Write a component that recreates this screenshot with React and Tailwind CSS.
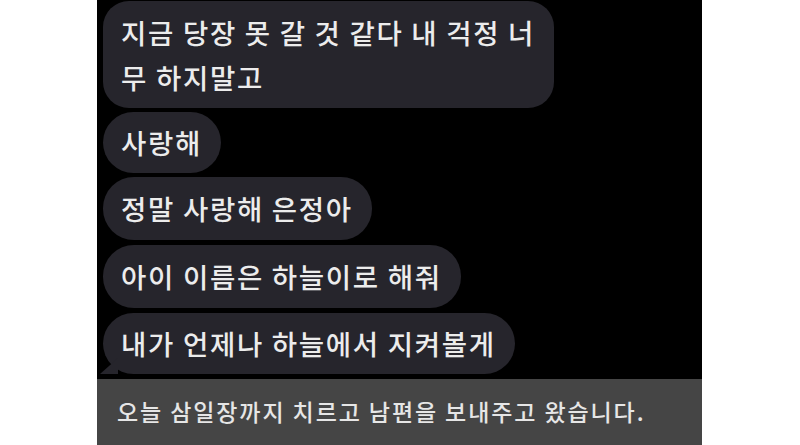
import React from "react";

const font = { fontFamily: '"Noto Sans CJK KR", "Noto Sans", sans-serif' };

function Bubble({ children, className = "", tail = false }) {
  return (
    <div className={"relative w-fit bg-[#26252c] text-[#ececec] font-medium text-[27.5px] tracking-[1.7px] leading-[45px] pl-[18px] pr-[19px] " + className}>
      {children}
      {tail && (
        <div className="absolute left-[-3px] bottom-0 w-[18px] h-[16px] bg-[#26252c] [clip-path:polygon(0_100%,100%_0,100%_100%)]" />
      )}
    </div>
  );
}

export default function App() {
  return (
    <div className="w-[800px] h-[445px] bg-white flex overflow-hidden" style={font}>
      <div className="ml-[97px] w-[605px] h-[445px] bg-black flex flex-col">
        <div className="flex flex-col pl-[6px] pt-[1px] gap-[4px]">
          <Bubble className="rounded-[26px] pt-[9px] pb-[8px]">
            지금 당장 못 갈 것 같다 내 걱정 너<br />무 하지말고
          </Bubble>
          <Bubble className="rounded-[31px] py-[8px]">사랑해</Bubble>
          <Bubble className="rounded-[31px] py-[9px]">정말 사랑해 은정아</Bubble>
          <Bubble className="rounded-[31px] py-[9px] mt-[1px]">아이 이름은 하늘이로 해줘</Bubble>
          <Bubble className="rounded-[31px] py-[8px] mt-[1px]" tail>
            내가 언제나 하늘에서 지켜볼게
          </Bubble>
        </div>
        <div className="mt-[5px] flex-1 bg-[#454545] text-[#e6e6e6] font-medium text-[23px] tracking-[1.9px] leading-none pl-[20px] pt-[21px]">
          오늘 삼일장까지 치르고 남편을 보내주고 왔습니다.
        </div>
      </div>
    </div>
  );
}
